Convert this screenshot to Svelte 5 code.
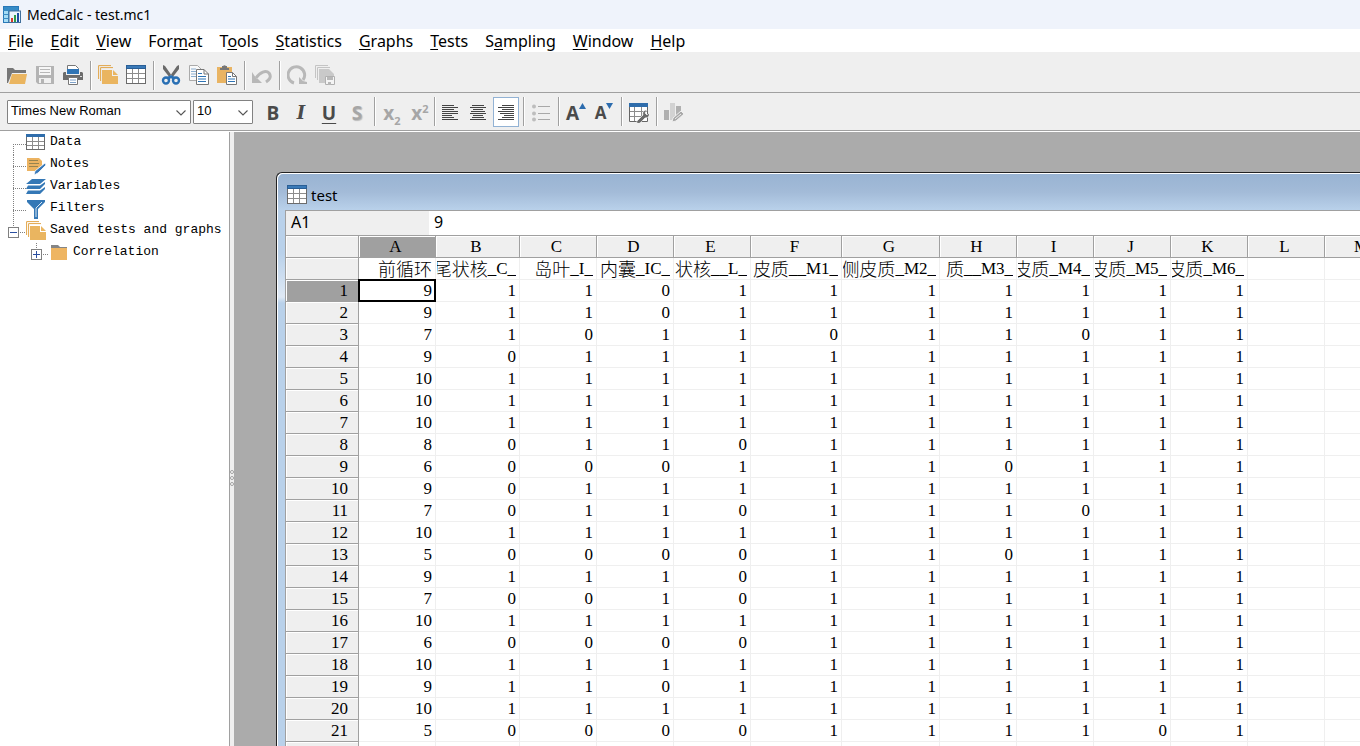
<script>
  const menus = [
    ['', 'F', 'ile'],
    ['', 'E', 'dit'],
    ['', 'V', 'iew'],
    ['For', 'm', 'at'],
    ['T', 'o', 'ols'],
    ['', 'S', 'tatistics'],
    ['', 'G', 'raphs'],
    ['', 'T', 'ests'],
    ['S', 'a', 'mpling'],
    ['', 'W', 'indow'],
    ['', 'H', 'elp']
  ];

  // Variable names are split so the Chinese part can have its own size.
  const columns = [
    { letter: 'A', width: 77, han: '前循环', latin: '' },
    { letter: 'B', width: 84, han: '尾状核', latin: '_C_' },
    { letter: 'C', width: 77, han: '岛叶', latin: '_I_' },
    { letter: 'D', width: 77, han: '内囊', latin: '_IC_' },
    { letter: 'E', width: 77, han: '状核', latin: '__L_' },
    { letter: 'F', width: 91, han: '皮质', latin: '__M1_' },
    { letter: 'G', width: 98, han: '侧皮质', latin: '_M2_' },
    { letter: 'H', width: 77, han: '质', latin: '__M3_' },
    { letter: 'I', width: 77, han: '皮质', latin: '_M4_' },
    { letter: 'J', width: 77, han: '皮质', latin: '_M5_' },
    { letter: 'K', width: 77, han: '皮质', latin: '_M6_' },
    { letter: 'L', width: 77, han: '', latin: '' },
    { letter: 'M', width: 77, han: '', latin: '' }
  ];

  const rows = [
    [9, 1, 1, 0, 1, 1, 1, 1, 1, 1, 1],
    [9, 1, 1, 0, 1, 1, 1, 1, 1, 1, 1],
    [7, 1, 0, 1, 1, 0, 1, 1, 0, 1, 1],
    [9, 0, 1, 1, 1, 1, 1, 1, 1, 1, 1],
    [10, 1, 1, 1, 1, 1, 1, 1, 1, 1, 1],
    [10, 1, 1, 1, 1, 1, 1, 1, 1, 1, 1],
    [10, 1, 1, 1, 1, 1, 1, 1, 1, 1, 1],
    [8, 0, 1, 1, 0, 1, 1, 1, 1, 1, 1],
    [6, 0, 0, 0, 1, 1, 1, 0, 1, 1, 1],
    [9, 0, 1, 1, 1, 1, 1, 1, 1, 1, 1],
    [7, 0, 1, 1, 0, 1, 1, 1, 0, 1, 1],
    [10, 1, 1, 1, 1, 1, 1, 1, 1, 1, 1],
    [5, 0, 0, 0, 0, 1, 1, 0, 1, 1, 1],
    [9, 1, 1, 1, 0, 1, 1, 1, 1, 1, 1],
    [7, 0, 0, 1, 0, 1, 1, 1, 1, 1, 1],
    [10, 1, 1, 1, 1, 1, 1, 1, 1, 1, 1],
    [6, 0, 0, 0, 0, 1, 1, 1, 1, 1, 1],
    [10, 1, 1, 1, 1, 1, 1, 1, 1, 1, 1],
    [9, 1, 1, 0, 1, 1, 1, 1, 1, 1, 1],
    [10, 1, 1, 1, 1, 1, 1, 1, 1, 1, 1],
    [5, 0, 0, 0, 0, 1, 1, 1, 1, 0, 1],
    []
  ];

  const tableWidth = 73 + columns.reduce((sum, c) => sum + c.width, 0);

  const fonts = ['Times New Roman', 'Arial', 'Courier New'];
  const sizes = ['8', '9', '10', '11', '12'];
  let font = 'Times New Roman';
  let size = '10';

  let selected = { row: 0, col: 0 };
  $: current = rows[selected.row][selected.col] ?? '';
</script>

{#snippet tableIcon()}
  <svg width="20" height="20" viewBox="0 0 20 20" shape-rendering="crispEdges">
    <rect width="20" height="19" fill="#6b6b6b" />
    <rect width="20" height="4" fill="#2a5f96" />
    <path d="M1 1h18v2H1z" fill="#3a7ab8" />
    <path d="M1 4h18v14H1z" fill="#fff" />
    <path d="M1 8.5h18M1 13.5h18M6.5 4v14M12.5 4v14" stroke="#8c8c8c" fill="none" />
  </svg>
{/snippet}

{#snippet stackIcon()}
  <svg width="20" height="20" viewBox="0 0 20 20">
    <path d="M.6 14V.6H13M2.6 16V2.6H15" stroke="#e2a548" fill="none" />
    <path d="M4 5h10v6h6v8H4z" fill="#eab560" />
    <path d="M15 5l5 5h-5z" fill="#eab560" />
  </svg>
{/snippet}

{#snippet chevron()}
  <svg class="chevron" width="10" height="6" viewBox="0 0 10 6">
    <path d="M.5.5 5 5 9.5.5" stroke="#555" stroke-width="1.1" fill="none" />
  </svg>
{/snippet}

<div class="app">
  <header class="titlebar">
    <svg width="18" height="18" viewBox="0 0 18 18">
      <rect x=".5" y=".5" width="15" height="16" fill="#a5dcf5" stroke="#2878b8" />
      <path d="M1 1h14v3H1z" fill="#358cc8" />
      <path d="M0 4.5h15M0 8.5h6M0 12.5h6M5.5 1v15M10.5 1v4" stroke="#3b8cc4" fill="none" />
      <rect x="6" y="5" width="11.5" height="11.5" fill="#eaf4fb" stroke="#406f9b" />
      <path d="M8 12h2v4H8z" fill="#d53a2c" />
      <path d="M11 9h2v7h-2z" fill="#2c9c48" />
      <path d="M14 7h2v9h-2z" fill="#1c4da0" />
    </svg>
    <span>MedCalc - test.mc1</span>
  </header>

  <nav class="menubar">
    {#each menus as [before, key, after]}
      <button>{before}<u>{key}</u>{after}</button>
    {/each}
  </nav>

  <div class="toolbar main">
    <button aria-label="Open">
      <svg width="20" height="20" viewBox="0 0 20 20">
        <path d="M0 3h6l2 2h11v3H5L1 18H0z" fill="#777" />
        <path d="M5 9h15l-2 10H2z" fill="#eab560" />
      </svg>
    </button>
    <button aria-label="Save">
      <svg width="20" height="20" viewBox="0 0 20 20">
        <path d="M1 1h18v18H3l-2-2z" fill="#b4b4b4" />
        <path d="M4 2h12v8H4z" fill="#f6f6f6" />
        <path d="M5 4.5h10M5 7.5h10" stroke="#b8b8b8" fill="none" />
        <path d="M4 13h12v5H4z" fill="#f0f0f0" />
        <path d="M6 14h3v4H6z" fill="#b4b4b4" />
      </svg>
    </button>
    <button aria-label="Print">
      <svg width="20" height="20" viewBox="0 0 20 20">
        <path d="M4.5.5h8l3 3V8h-11z" fill="#fff" stroke="#777" />
        <path d="M1 7h18l1 1v7H0V8z" fill="#6c6c6c" />
        <path d="M3 6h14v4H3z" fill="#efefef" />
        <path d="M4 4h12v5H4z" fill="#2f74b5" />
        <path d="M17 11h2v1h-2z" fill="#ddd" />
        <path d="M5.5 12.5h9v7h-9z" fill="#fff" stroke="#777" />
        <path d="M7 15h6M7 17.5h6" stroke="#7fa3cb" fill="none" />
      </svg>
    </button>
    <i class="sep"></i>
    <button aria-label="Saved tests">{@render stackIcon()}</button>
    <button aria-label="Data">{@render tableIcon()}</button>
    <i class="sep"></i>
    <button aria-label="Cut">
      <svg width="20" height="20" viewBox="0 0 20 20">
        <path d="M2 0l2 1 7 10-2 2L2 4zM18 0l-2 1L9 11l2 2 7-9z" fill="#6a6a6a" />
        <circle cx="5" cy="15.5" r="3" fill="none" stroke="#2a70b4" stroke-width="2.4" />
        <circle cx="15" cy="15.5" r="3" fill="none" stroke="#2a70b4" stroke-width="2.4" />
        <path d="M6 12l4-2 4 2-2 3-2-2-2 2z" fill="#2a70b4" />
      </svg>
    </button>
    <button aria-label="Copy">
      <svg width="20" height="20" viewBox="0 0 20 20">
        <path d="M.5.5h8l4 4v11H.5z" fill="#fafafa" stroke="#aaa" />
        <path d="M2 4h5M2 6.5h5M2 9h5M2 11.5h5" stroke="#8baed0" fill="none" />
        <path d="M7.5 4.5H15L19.500 9v10.500h-12z" fill="#fff" stroke="#777" />
        <path d="M15 4.500V9h4.500" fill="none" stroke="#777" />
        <path d="M9 8.500h4M9 11.500h8M9 14h8M9 16.500h8" stroke="#2f74b5" fill="none" />
      </svg>
    </button>
    <button aria-label="Paste">
      <svg width="20" height="20" viewBox="0 0 20 20">
        <path d="M0 2h15v16H0z" fill="#e9b463" />
        <path d="M3 3h2V1h1a2 2 0 0 1 3 0h1v2h2v2H3z" fill="#777" />
        <path d="M9.500 7.500h6l4 4v8h-10z" fill="#fff" stroke="#777" />
        <path d="M15.500 7.500v4h4" fill="none" stroke="#777" />
        <path d="M11 11.500h3M11 14h7M11 16.500h7" stroke="#2f74b5" fill="none" />
      </svg>
    </button>
    <i class="sep"></i>
    <button aria-label="Undo">
      <svg width="20" height="20" viewBox="0 0 20 20">
        <path d="M4 13C8 7 14 5 17 8c3 4 0 7-3 9" stroke="#b8b8b8" stroke-width="3" fill="none" />
        <path d="M0 7v11h10L6 14l-2-1z" fill="#b8b8b8" />
      </svg>
    </button>
    <i class="sep"></i>
    <button aria-label="Repeat">
      <svg width="20" height="20" viewBox="0 0 20 20">
        <path d="M7 18A8.300 8.300 0 1 1 16 15" stroke="#b8b8b8" stroke-width="3" fill="none" />
        <path d="M12 12v7h8v-2l-4-1z" fill="#b8b8b8" />
      </svg>
    </button>
    <button aria-label="Save all">
      <svg width="20" height="20" viewBox="0 0 20 20">
        <path d="M.5 13V.5H13M2.500 15V2.500H15" stroke="#c4c4c4" fill="none" />
        <path d="M4 4h10l5 5v9H4z" fill="#c9c9c9" />
        <path d="M10.500 11.500h9v8h-9z" fill="#f4f4f4" stroke="#b0b0b0" />
        <path d="M12 12h6v3h-6zM13 17h3v3h-3z" fill="#b8b8b8" />
      </svg>
    </button>
  </div>

  <div class="toolbar format">
    <label class="select family">
      <select aria-label="Font" bind:value={font}>
        {#each fonts as f}<option>{f}</option>{/each}
      </select>
      {@render chevron()}
    </label>
    <label class="select size">
      <select aria-label="Font size" bind:value={size}>
        {#each sizes as s}<option>{s}</option>{/each}
      </select>
      {@render chevron()}
    </label>
    <button class="glyph"><b>B</b></button>
    <button class="glyph italic"><b>I</b></button>
    <button class="glyph underline"><b>U</b></button>
    <button class="glyph shadow"><b>S</b></button>
    <i class="sep"></i>
    <button class="glyph off"><b>x<sub>2</sub></b></button>
    <button class="glyph off"><b>x<sup>2</sup></b></button>
    <i class="sep thin"></i>
    <button aria-label="Align left">
      <svg width="16" height="16" viewBox="0 0 16 16" shape-rendering="crispEdges">
        <path d="M0 .5h12M0 2.500h16M0 4.500h12M0 6.500h16M0 8.500h16M0 10.500h10M0 12.500h12M0 14.500h16" stroke="#444" />
      </svg>
    </button>
    <button aria-label="Align center">
      <svg width="16" height="16" viewBox="0 0 16 16" shape-rendering="crispEdges">
        <path d="M2 .5h12M0 2.500h16M3 4.500h10M1 6.500h14M0 8.500h16M3 10.500h10M2 12.500h12M0 14.500h16" stroke="#444" />
      </svg>
    </button>
    <button class="active" aria-label="Align right">
      <svg width="16" height="16" viewBox="0 0 16 16" shape-rendering="crispEdges">
        <path d="M4 .5h12M0 2.500h16M4 4.500h12M0 6.500h16M2 8.500h14M6 10.500h10M4 12.500h12M0 14.500h16" stroke="#444" />
      </svg>
    </button>
    <i class="sep"></i>
    <button aria-label="List">
      <svg width="18" height="18" viewBox="0 0 18 18">
        <path d="M6 2.500h12M6 9.500h12M6 15.500h12" stroke="#a8a8a8" />
        <circle cx="2" cy="2.500" r="2" fill="#bdbdbd" />
        <circle cx="2" cy="9.500" r="2" fill="#bdbdbd" />
        <circle cx="2" cy="15.500" r="2" fill="#bdbdbd" />
      </svg>
    </button>
    <i class="sep"></i>
    <button class="glyph grow" aria-label="Increase font size">
      <b>A</b>
      <svg width="7" height="6" viewBox="0 0 7 6"><path d="M3.500 0 7 6H0z" fill="#2c6cae" /></svg>
    </button>
    <button class="glyph shrink" aria-label="Decrease font size">
      <b>A</b>
      <svg width="7" height="6" viewBox="0 0 7 6"><path d="M0 0h7L3.500 6z" fill="#2c6cae" /></svg>
    </button>
    <i class="sep"></i>
    <button aria-label="Format spreadsheet">
      <svg width="20" height="20" viewBox="0 0 20 20">
        <path d="M.5.5h18v18H.5z" fill="#fff" stroke="#666" />
        <path d="M0 0h19v4H0z" fill="#2f6dab" />
        <path d="M1 8.500h17M1 13.500h17M5.500 4v14M12.500 4v14" stroke="#8c8c8c" />
        <path d="M8 18l6-6c-1-3 1-5 4-5l-2 3 2 2 2-2c1 3-1 5-4 5l-5 5c-2 1-4 0-3-2z" fill="#6a6a6a" stroke="#fff" stroke-width=".6" />
      </svg>
    </button>
    <i class="sep"></i>
    <button aria-label="Edit graph">
      <svg width="20" height="20" viewBox="0 0 20 20">
        <path d="M0 7h5v10H0z" fill="#b0b0b0" />
        <path d="M6 0h5v17H6z" fill="#d2d2d2" />
        <path d="M12 3h5v10h-5z" fill="#b0b0b0" />
        <path d="M8 19l1-4 8-7 3 3-8 7z" fill="#a8a8a8" stroke="#efefef" />
        <path d="M11 16l6-5" stroke="#eee" />
      </svg>
    </button>
  </div>

  <div class="body">
    <aside>
      <ul>
        <li>
          <svg class="branch" width="26" height="22" viewBox="0 0 26 22" shape-rendering="crispEdges">
            <path d="M13.500 11v11M13 11.500h13" />
          </svg>
          <svg width="20" height="20" viewBox="0 0 20 20" shape-rendering="crispEdges">
            <path d="M0 1h19v16H0z" fill="#6b6b6b" />
            <path d="M0 1h19v3H0z" fill="#2f6dab" />
            <path d="M1 4h17v12H1z" fill="#fff" />
            <path d="M1 8.500h17M1 12.500h17M6.500 4v12M12.500 4v12" stroke="#8c8c8c" />
          </svg>
          <span>Data</span>
        </li>
        <li>
          <svg class="branch" width="26" height="22" viewBox="0 0 26 22" shape-rendering="crispEdges">
            <path d="M13.500 0v22M13 11.500h13" />
          </svg>
          <svg width="20" height="20" viewBox="0 0 20 20">
            <path d="M1 3h12l3 3v8l-3 2H1z" fill="#ecb361" />
            <path d="M3 5.500h9M3 8.500h10M3 11.500h9" stroke="#97834f" fill="none" />
            <path d="M8 20l1-4 10-8 1 2-8 8z" fill="#3878b8" stroke="#fff" stroke-width=".8" />
          </svg>
          <span>Notes</span>
        </li>
        <li>
          <svg class="branch" width="26" height="22" viewBox="0 0 26 22" shape-rendering="crispEdges">
            <path d="M13.500 0v22M13 11.500h13" />
          </svg>
          <svg width="20" height="20" viewBox="0 0 20 20">
            <path d="M6 2h14l-6 5H0zM2 8.500h12L19 5v2l-5 5H0zM2 13.500h12L19 10v2l-5 5H0z" fill="#3478b6" />
          </svg>
          <span>Variables</span>
        </li>
        <li>
          <svg class="branch" width="26" height="22" viewBox="0 0 26 22" shape-rendering="crispEdges">
            <path d="M13.500 0v22M13 11.500h13" />
          </svg>
          <svg width="20" height="20" viewBox="0 0 20 20">
            <path d="M1 1h18v2l-7 7v10H8V10L1 3z" fill="#3478b6" />
            <path d="M16 3l-6 6v9" stroke="#dbe7f3" fill="none" />
          </svg>
          <span>Filters</span>
        </li>
        <li>
          <svg class="branch" width="26" height="22" viewBox="0 0 26 22" shape-rendering="crispEdges">
            <path d="M13.500 0v6M20 11.500h6" />
            <rect x="8.500" y="6.500" width="10" height="10" />
            <path class="sign" d="M10 11.500h7" />
          </svg>
          {@render stackIcon()}
          <span>Saved tests and graphs</span>
        </li>
        <li class="child">
          <svg class="branch" width="26" height="22" viewBox="0 0 26 22" shape-rendering="crispEdges">
            <path d="M12.500 0v6M19 11.500h5" />
            <rect x="7.500" y="6.500" width="10" height="10" />
            <path class="sign" d="M9 11.500h7M12.500 8v7" />
          </svg>
          <svg width="20" height="20" viewBox="0 0 20 20">
            <path d="M1 2h7l2 2h7v4H1z" fill="#858585" />
            <path d="M1 5h16v12H1z" fill="#eeb562" />
          </svg>
          <span>Correlation</span>
        </li>
      </ul>
    </aside>
    <div class="splitter">
      <i></i><i></i><i></i>
    </div>

    <main>
      <section class="window">
        <div class="caption">
          {@render tableIcon()}
          <span>test</span>
        </div>
        <div class="sheet">
          <div class="formula">
            <label for="cell-value">A1</label>
            <input id="cell-value" value={current} />
          </div>
          <table style="width: {tableWidth}px">
            <colgroup>
              <col style="width: 73px" />
              {#each columns as c}
                <col style="width: {c.width}px" />
              {/each}
            </colgroup>
            <thead>
              <tr>
                <th></th>
                {#each columns as c, j}
                  <th class="letter" class:on={j === selected.col}>{c.letter}</th>
                {/each}
              </tr>
            </thead>
            <tbody>
              <tr>
                <th></th>
                {#each columns as c}
                  <td><div><span class="han">{c.han}</span>{c.latin}</div></td>
                {/each}
              </tr>
              {#each rows as row, i}
                <tr>
                  <th class="num" class:on={i === selected.row}>{i + 1}</th>
                  {#each columns as c, j}
                    <td class:selected={i === selected.row && j === selected.col}>
                      <div>{row[j] ?? ''}</div>
                    </td>
                  {/each}
                </tr>
              {/each}
            </tbody>
          </table>
        </div>
      </section>
    </main>
  </div>
</div>

<style>
  :global(body) {
    margin: 0;
    overflow: hidden;
  }

  .app {
    display: flex;
    flex-direction: column;
    height: 100vh;
    overflow: hidden;
    background: #efefef;
    color: #000;
    font-family: "Noto Sans", "Noto Sans CJK SC", sans-serif;
    font-size: 16px;
  }

  svg {
    display: block;
    flex: none;
  }

  button {
    padding: 0;
    border: 0;
    background: none;
    color: inherit;
    font: inherit;
  }

  .titlebar {
    display: flex;
    align-items: center;
    gap: 6px;
    height: 29px;
    padding-left: 3px;
    background: #eff3fb;
    font-size: 14px;
  }

  .menubar {
    display: flex;
    gap: 17px;
    height: 23px;
    padding-left: 8px;
    background: #fff;
  }

  .menubar button {
    line-height: 24px;
  }

  .menubar u {
    text-underline-offset: 2px;
    text-decoration-skip-ink: none;
  }

  .toolbar {
    display: flex;
    align-items: center;
    flex: none;
    height: 40px;
    padding-left: 3px;
    border-bottom: 1px solid #a0a0a0;
  }

  .toolbar.main {
    box-sizing: border-box;
    height: 41px;
    padding-top: 6px;
  }

  .toolbar button {
    display: flex;
    align-items: center;
    justify-content: center;
    width: 28px;
    height: 30px;
  }

  .sep {
    width: 2px;
    height: 29px;
    margin: 0 2px 0 3px;
    box-sizing: border-box;
    border-left: 1px solid #a0a0a0;
    border-right: 1px solid #fff;
  }

  .sep.thin {
    margin: 0;
  }

  .format {
    height: 37px;
    padding-left: 7px;
  }

  .toolbar.format button {
    padding-top: 2px;
  }

  .select {
    position: relative;
    margin-right: 2px;
  }

  .select select {
    appearance: none;
    display: block;
    width: 100%;
    height: 24px;
    padding: 0 3px 2px;
    border: 1px solid #828282;
    border-radius: 1px;
    background: #fff;
    color: #000;
    font: 13px "Liberation Sans", sans-serif;
  }

  .family {
    width: 184px;
  }

  .size {
    width: 60px;
    margin-right: 6px;
  }

  .chevron {
    position: absolute;
    right: 5px;
    top: 10px;
    pointer-events: none;
  }

  .toolbar .glyph {
    color: #4a4a4a;
    font-family: "Open Sans", sans-serif;
    font-size: 19px;
    line-height: 28px;
  }

  .toolbar .italic {
    font-family: "DejaVu Serif", serif;
    font-style: italic;
    font-size: 18px;
  }

  .glyph.underline b {
    text-decoration: underline;
    text-underline-offset: 3px;
  }

  .toolbar .glyph.shadow {
    color: #a6a6a6;
    text-shadow: 1px 1px 1px #bbb;
  }

  .toolbar .glyph.off {
    color: #a6a6a6;
  }

  .glyph sub,
  .glyph sup {
    font-size: 11px;
    line-height: 0;
  }

  .grow svg,
  .shrink svg {
    align-self: flex-start;
    margin-top: 4px;
  }

  .toolbar .shrink {
    font-size: 17px;
  }

  .active {
    box-sizing: border-box;
  }

  .toolbar .active {
    width: 26px;
    margin: 0 1px;
    border: 1px solid #92b2d4;
    background: #fff;
  }

  .body {
    display: flex;
    flex: 1;
    min-height: 0;
    padding-top: 1px;
    background: #fff;
  }

  aside {
    flex: none;
    width: 229px;
    overflow: hidden;
    background: #fff;
    border-right: 1px solid #a0a0a0;
  }

  ul {
    margin: 0;
    padding: 1px 0 0;
    list-style: none;
  }

  li {
    display: flex;
    height: 22px;
    white-space: nowrap;
    font: 13px/18px "Liberation Mono", monospace;
  }

  li span {
    margin-left: 4px;
  }

  li.child {
    padding-left: 24px;
  }

  li.child span {
    margin-left: 3px;
  }

  .branch path,
  .branch rect {
    fill: none;
    stroke: #808080;
  }

  .branch path {
    stroke-dasharray: 1 1;
  }

  .branch .sign {
    stroke: #2b4fa0;
    stroke-dasharray: none;
  }

  .splitter {
    display: flex;
    flex-direction: column;
    justify-content: center;
    align-items: center;
    gap: 2px;
    flex: none;
    width: 4px;
    padding-top: 78px;
    background: #efefef;
  }

  .splitter i {
    width: 2px;
    height: 2px;
    border: 1px solid #a0a0a0;
    border-radius: 2px;
    background: #fff;
  }

  main {
    flex: 1;
    min-width: 0;
    overflow: hidden;
    padding: 40px 0 0 42px;
    background: #ababab;
  }

  .window {
    height: 100%;
    box-sizing: border-box;
    border: solid #222;
    border-width: 1px 0 0 1px;
    border-top-left-radius: 6px;
    box-shadow: inset 1px 1px #fff;
    padding-left: 8px;
    background: linear-gradient(#98b3d2, #a3bbd8 19px, #b9d1ea 37px, #b9d1ea 80px, #dfe9f5 124px, #b9d1ea 130px);
  }

  .caption {
    display: flex;
    align-items: center;
    gap: 4px;
    height: 37px;
    padding: 6px 0 0 2px;
    box-sizing: border-box;
    font-size: 15px;
  }

  .sheet {
    overflow: hidden;
    border: solid #a0a0a0;
    border-width: 1px 0 0 1px;
    background: #fff;
  }

  .formula {
    display: flex;
    height: 24px;
    line-height: 23px;
  }

  .formula label {
    width: 138px;
    padding-left: 5px;
    background: #efefef;
  }

  .formula input {
    flex: 1;
    min-width: 0;
    padding: 0 5px 1px;
    border: 0;
    outline: 0;
    background: #fff;
    font: inherit;
  }

  table {
    table-layout: fixed;
    border-spacing: 0;
    border-top: 1px solid #a0a0a0;
    font: 17px/21px "Liberation Serif", "Noto Sans CJK SC", serif;
  }

  th,
  td {
    height: 22px;
    padding: 0;
    box-sizing: border-box;
  }

  th {
    border: solid #a0a0a0;
    border-width: 0 1px 1px 0;
    background: #efefef;
    box-shadow: inset 1px 1px #fff;
    font-weight: normal;
  }

  th.on {
    background: #a0a0a0;
  }

  th.letter {
    padding-right: 3px;
  }

  th.num {
    padding-right: 10px;
    text-align: right;
  }

  td {
    position: relative;
    border: solid #efefef;
    border-width: 0 1px 1px 0;
  }

  td div {
    display: flex;
    justify-content: flex-end;
    height: 21px;
    margin: 0 3px 0 1px;
    overflow: hidden;
    white-space: nowrap;
  }

  .han {
    font-family: "Noto Sans CJK SC", sans-serif;
    font-size: 18px;
    font-weight: 300;
    line-height: 20px;
  }

  td.selected::after {
    content: '';
    position: absolute;
    inset: -1px;
    border: 2px solid #000;
    z-index: 1;
  }
</style>
